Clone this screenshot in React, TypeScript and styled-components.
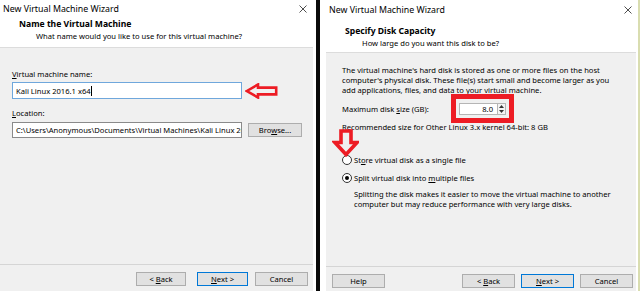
import styled, { createGlobalStyle } from 'styled-components'

const FONT = '"Noto Sans", "Open Sans", "DejaVu Sans", sans-serif'
const RED = '#ed1c24'
const PANEL = '#f0f0f0'

const GlobalStyle = createGlobalStyle`
  html, body { margin: 0; padding: 0; background: #ffffff; }
  body { font-family: ${FONT}; font-size: 7.6px; color: #000; }
  * { box-sizing: border-box; }
`

const Screen = styled.div`
  display: flex;
  width: 640px;
  height: 291px;
  overflow: hidden;
  background: #ffffff;
`

const Window = styled.div<{ $width: number }>`
  display: flex;
  flex-direction: column;
  flex: 0 0 ${(p) => p.$width}px;
  height: 100%;
  background: #ffffff;
`

const FramedWindow = styled(Window)`
  padding: 0 2px 0 6px;
  border-right: 2px solid #d9ddb0;
`

const Splitter = styled.div`
  flex: 0 0 4px;
  margin-left: 3px;
  background: #0a0a0a;
`

const TitleBar = styled.div<{ $padRight: number; $height: number }>`
  display: flex;
  align-items: center;
  justify-content: space-between;
  flex: 0 0 ${(p) => p.$height}px;
  padding: 0 ${(p) => p.$padRight}px 0 3px;
  font-size: 8.8px;
  line-height: 10px;
  color: #000;
`

const Header = styled.div<{ $height: number; $top: number }>`
  flex: 0 0 ${(p) => p.$height}px;
  padding-top: ${(p) => p.$top}px;
  border-bottom: 1px solid #dcdcdc;
  background: #ffffff;
`

const Heading = styled.div`
  padding-left: 19px;
  font-size: 8.6px;
  font-weight: 700;
  line-height: 10px;
`

const Subheading = styled.div`
  padding-left: 36px;
  margin-top: 2px;
  line-height: 10px;
`

const Body = styled.div<{ $padTop: number; $padLeft: number }>`
  flex: 1;
  display: flex;
  flex-direction: column;
  padding: ${(p) => p.$padTop}px 0 0 ${(p) => p.$padLeft}px;
  background: ${PANEL};
`

const Label = styled.div<{ $gap?: number }>`
  line-height: 10px;
  margin-top: ${(p) => p.$gap ?? 0}px;
`

const FieldRow = styled.div<{ $gap: number }>`
  display: flex;
  align-items: center;
  gap: 6px;
  margin-top: ${(p) => p.$gap}px;
`

const TextBox = styled.div<{ $focused?: boolean }>`
  display: flex;
  align-items: center;
  width: 230px;
  height: ${(p) => (p.$focused ? 17 : 16)}px;
  padding-left: 3px;
  background: #ffffff;
  border: 1px solid ${(p) => (p.$focused ? '#6fa7dc' : '#8a8a8a')};
  white-space: nowrap;
  overflow: hidden;
  line-height: 10px;
`

const Caret = styled.span`
  display: inline-block;
  width: 1px;
  height: 10px;
  background: #000;
`

const Button = styled.div<{ $default?: boolean; $width?: number }>`
  display: flex;
  align-items: center;
  justify-content: center;
  flex: 0 0 ${(p) => p.$width ?? 53}px;
  height: 14px;
  background: #e1e1e1;
  border: 1px solid ${(p) => (p.$default ? '#0078d7' : '#adadad')};
  line-height: 10px;
  white-space: nowrap;
`

const Accel = styled.span`
  text-decoration: underline;
`

const Footer = styled.div<{ $top: number; $right: number }>`
  display: flex;
  align-items: flex-start;
  gap: 6px;
  flex: 0 0 ${(p) => 291 - p.$top}px;
  padding: 7px ${(p) => p.$right}px 0 6px;
  border-top: 1px solid #d5d5d5;
  background: ${PANEL};
`

const Spacer = styled.div`
  flex: 1;
`

const Paragraph = styled.div<{ $indent?: number; $gap?: number }>`
  line-height: 10px;
  padding-left: ${(p) => p.$indent ?? 0}px;
  margin-top: ${(p) => p.$gap ?? 0}px;
  white-space: pre-line;
`

const SizeRow = styled.div`
  display: flex;
  align-items: center;
  margin-top: 8px;
  height: 12px;
`

const SizeLabel = styled.div`
  width: 117px;
  line-height: 10px;
`

const SpinWrap = styled.div`
  position: relative;
  display: flex;
  height: 12px;
`

const SpinInput = styled.div`
  display: flex;
  align-items: center;
  justify-content: flex-end;
  width: 38px;
  height: 12px;
  padding-right: 4px;
  background: #ffffff;
  border: 1px solid #b5b5b5;
  border-right: none;
`

const SpinButtons = styled.div`
  display: flex;
  flex-direction: column;
  width: 9px;
  height: 12px;
  border: 1px solid #b5b5b5;
  background: #f4f4f4;
`

const SpinHalf = styled.div`
  flex: 1;
  display: flex;
  align-items: center;
  justify-content: center;
`

const RedFrame = styled.div`
  position: absolute;
  left: -8px;
  right: -8px;
  top: -9px;
  bottom: -8px;
  border: 5px solid ${RED};
`

const RadioGroup = styled.div`
  position: relative;
  display: flex;
  flex-direction: column;
  gap: 6px;
  margin-top: 22px;
`

const RadioRow = styled.div`
  display: flex;
  align-items: center;
  gap: 2px;
  height: 12px;
  line-height: 10px;
`

const RadioCircle = styled.div<{ $checked?: boolean }>`
  display: flex;
  align-items: center;
  justify-content: center;
  width: 10px;
  height: 10px;
  border-radius: 50%;
  border: 1px solid #333333;
  background: #ffffff;

  &::after {
    content: '';
    display: ${(p) => (p.$checked ? 'block' : 'none')};
    width: 4px;
    height: 4px;
    border-radius: 50%;
    background: #000;
  }
`

const DownArrow = styled.svg`
  position: absolute;
  left: -10px;
  top: -25px;
`

const LeftArrow = styled.svg`
  margin-left: -3px;
`

const Close = styled.svg`
  display: block;
`

function CloseIcon() {
  return (
    <Close width="8" height="8" viewBox="0 0 8 8">
      <path d="M0.5 0.5 L7.5 7.5 M7.5 0.5 L0.5 7.5" stroke="#3a3a3a" strokeWidth="0.9" fill="none" />
    </Close>
  )
}

function App() {
  return (
    <Screen>
      <GlobalStyle />

      <Window $width={313}>
        <TitleBar $padRight={6} $height={18}>
          <span>New Virtual Machine Wizard</span>
          <CloseIcon />
        </TitleBar>
        <Header $height={30} $top={1}>
          <Heading>Name the Virtual Machine</Heading>
          <Subheading>What name would you like to use for this virtual machine?</Subheading>
        </Header>
        <Body $padTop={21} $padLeft={12}>
          <Label>
            <Accel>V</Accel>irtual machine name:
          </Label>
          <FieldRow $gap={3}>
            <TextBox $focused>
              Kali Linux 2016.1 x64
              <Caret />
            </TextBox>
            <LeftArrow width="33" height="16" viewBox="0 0 33 16">
              <path
                d="M1.8 8 L13 1.5 L13 4.6 L31.2 4.6 L31.2 11.4 L13 11.4 L13 14.5 Z"
                fill="none"
                stroke={RED}
                strokeWidth="2.6"
                strokeLinejoin="miter"
              />
            </LeftArrow>
          </FieldRow>
          <Label $gap={9}>
            <Accel>L</Accel>ocation:
          </Label>
          <FieldRow $gap={4}>
            <TextBox>C:\Users\Anonymous\Documents\Virtual Machines\Kali Linux 20</TextBox>
            <Button $width={54}>
              <span>
                Bro<Accel>w</Accel>se...
              </span>
            </Button>
          </FieldRow>
        </Body>
        <Footer $top={264} $right={5}>
          <Spacer />
          <Button $width={50}>
            <span>
              &lt; <Accel>B</Accel>ack
            </span>
          </Button>
          <Button $default $width={51} style={{ marginLeft: 5 }}>
            <span>
              <Accel>N</Accel>ext &gt;
            </span>
          </Button>
          <Button $width={53} style={{ marginLeft: 1 }}>
            Cancel
          </Button>
        </Footer>
      </Window>

      <Splitter />

      <FramedWindow $width={320}>
        <TitleBar $padRight={4} $height={20}>
          <span>New Virtual Machine Wizard</span>
          <CloseIcon />
        </TitleBar>
        <Header $height={33} $top={6}>
          <Heading>Specify Disk Capacity</Heading>
          <Subheading>How large do you want this disk to be?</Subheading>
        </Header>
        <Body $padTop={12} $padLeft={16}>
          <Paragraph>
            {"The virtual machine's hard disk is stored as one or more files on the host\ncomputer's physical disk. These file(s) start small and become larger as you\nadd applications, files, and data to your virtual machine."}
          </Paragraph>
          <SizeRow>
            <SizeLabel>
              Maximum disk <Accel>s</Accel>ize (GB):
            </SizeLabel>
            <SpinWrap>
              <SpinInput>8.0</SpinInput>
              <SpinButtons>
                <SpinHalf>
                  <svg width="5" height="3" viewBox="0 0 5 3">
                    <path d="M0 3 L2.5 0 L5 3 Z" fill="#333" />
                  </svg>
                </SpinHalf>
                <SpinHalf>
                  <svg width="5" height="3" viewBox="0 0 5 3">
                    <path d="M0 0 L2.5 3 L5 0 Z" fill="#333" />
                  </svg>
                </SpinHalf>
              </SpinButtons>
              <RedFrame />
            </SpinWrap>
          </SizeRow>
          <Paragraph $gap={7}>Recommended size for Other Linux 3.x kernel 64-bit: 8 GB</Paragraph>
          <RadioGroup>
            <DownArrow width="27" height="28" viewBox="0 0 27 28">
              <path
                d="M9 2 L19 2 L19 13.5 L25 13.5 L14 25.5 L3 13.5 L9 13.5 Z"
                fill="none"
                stroke={RED}
                strokeWidth="3.6"
                strokeLinejoin="miter"
              />
            </DownArrow>
            <RadioRow>
              <RadioCircle />
              <span>
                St<Accel>o</Accel>re virtual disk as a single file
              </span>
            </RadioRow>
            <RadioRow>
              <RadioCircle $checked />
              <span>
                Split virtual disk into <Accel>m</Accel>ultiple files
              </span>
            </RadioRow>
          </RadioGroup>
          <Paragraph $indent={12} $gap={5}>
            {'Splitting the disk makes it easier to move the virtual machine to another\ncomputer but may reduce performance with very large disks.'}
          </Paragraph>
        </Body>
        <Footer $top={266} $right={3}>
          <Button>Help</Button>
          <Spacer />
          <Button>
            <span>
              &lt; <Accel>B</Accel>ack
            </span>
          </Button>
          <Button $default>
            <span>
              <Accel>N</Accel>ext &gt;
            </span>
          </Button>
          <Button>Cancel</Button>
        </Footer>
      </FramedWindow>
    </Screen>
  )
}

export default App
